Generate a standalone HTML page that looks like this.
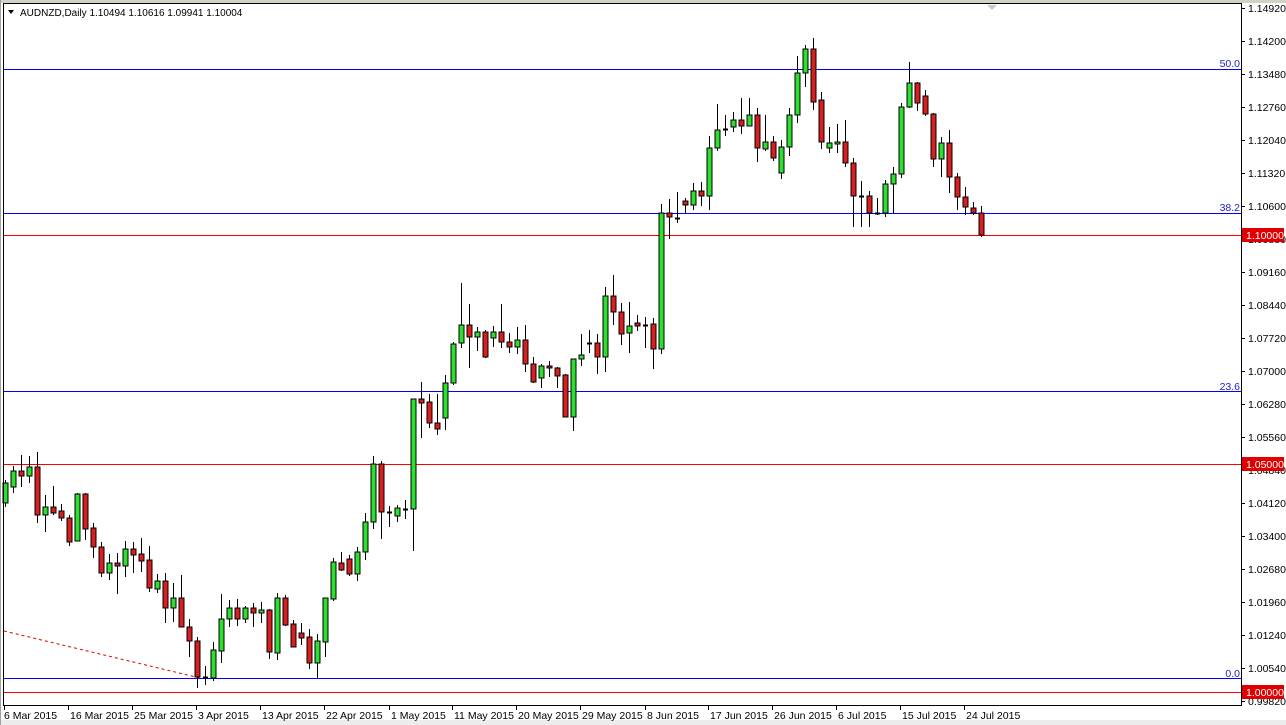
<!DOCTYPE html>
<html><head><meta charset="utf-8">
<style>
html,body{margin:0;padding:0;background:#fff;width:1286px;height:725px;overflow:hidden}
svg{display:block}
text{font-family:"Liberation Sans",Arial,sans-serif;font-size:10.5px;fill:#000}
</style></head>
<body>
<svg id="s" width="1286" height="725" viewBox="0 0 1286 725" xmlns="http://www.w3.org/2000/svg">
<rect x="0" y="0" width="1286" height="725" fill="#fff"/>
<rect x="0" y="0" width="1286" height="3" fill="#d4d0c8"/>
<rect x="0" y="720" width="1286" height="5" fill="#ececec"/>
<rect x="0" y="0" width="1" height="725" fill="#a0a0a0"/>
<polygon points="987,5 997,5 992,10" fill="#c8c8c8"/>
<rect x="4" y="69" width="1237" height="1" fill="#0000ff"/>
<rect x="4" y="213" width="1237" height="1" fill="#0000ff"/>
<rect x="4" y="391" width="1237" height="1" fill="#0000ff"/>
<rect x="4" y="678" width="1237" height="1" fill="#0000ff"/>
<rect x="4" y="235" width="1237" height="1" fill="#ff0000"/>
<rect x="4" y="464" width="1237" height="1" fill="#ff0000"/>
<rect x="4" y="692" width="1237" height="1" fill="#ff0000"/>
<line x1="4" y1="631" x2="200" y2="678" stroke="#e00000" stroke-width="1" stroke-dasharray="3,3"/>
<g style="font-size:10px">
<text x="1240" y="67" text-anchor="end" style="fill:#2020c0">50.0</text>
<text x="1240" y="211" text-anchor="end" style="fill:#2020c0">38.2</text>
<text x="1240" y="390" text-anchor="end" style="fill:#2020c0">23.6</text>
<text x="1240" y="677" text-anchor="end" style="fill:#2020c0">0.0</text>
</g>
<g id="c"></g>
<rect x="3.5" y="3.5" width="1238" height="702" fill="none" stroke="#000" stroke-width="1"/>
<text x="20" y="16" style="font-size:10px">AUDNZD,Daily  1.10494 1.10616 1.09941 1.10004</text>
<polygon points="8,10 14,10 11,14" fill="#000"/>
<g id="ax"></g>
<rect x="1242" y="228" width="42" height="14" fill="#e00000"/>
<text x="1246" y="239" style="fill:#fff">1.10000</text>
<rect x="1242" y="457" width="42" height="14" fill="#e00000"/>
<text x="1246" y="468" style="fill:#fff">1.05000</text>
<rect x="1242" y="685" width="42" height="14" fill="#e00000"/>
<text x="1246" y="696" style="fill:#fff">1.00000</text>
</svg>
<script>
var d=[[5,503,483,480,507],[13,487,471,466,493],[21,471,476,455,487],[29,476,467,456,483],[37,467,515,452,523],[45,515,507,495,532],[53,507,513,486,515],[61,511,518,504,521],[69,518,542,515,546],[77,541,494,493,541],[85,494,529,493,540],[93,528,547,523,558],[101,547,573,542,577],[109,573,563,554,580],[117,563,566,553,594],[125,566,549,541,577],[133,549,555,542,573],[141,554,561,538,572],[149,560,588,546,592],[157,589,581,574,593],[165,581,608,573,623],[173,608,598,583,622],[181,598,627,575,627],[189,627,641,619,657],[197,641,677,637,688],[205,677,677,666,685],[213,678,650,642,681],[221,651,619,594,663],[229,619,608,600,627],[237,608,619,599,626],[245,619,608,606,623],[253,608,613,603,627],[261,613,610,602,623],[269,610,652,609,659],[277,653,598,593,660],[285,598,625,595,626],[293,624,647,620,647],[301,633,638,623,645],[309,637,663,629,669],[317,663,641,634,678],[325,642,598,598,657],[333,599,562,558,601],[341,563,570,552,571],[349,559,574,555,576],[357,574,552,547,581],[365,552,522,513,560],[373,522,464,456,529],[381,464,512,461,539],[389,512,512,506,527],[397,516,508,505,522],[405,509,509,500,519],[413,509,399,399,551],[421,399,403,382,438],[429,402,423,394,428],[437,423,429,394,435],[445,418,383,375,430],[453,383,344,342,385],[461,343,325,283,348],[469,325,337,304,368],[477,337,332,327,351],[485,332,357,330,358],[493,338,332,326,347],[501,332,342,304,348],[509,342,347,333,353],[517,347,340,327,354],[525,340,364,325,372],[533,364,382,357,383],[541,378,366,364,388],[549,366,368,361,377],[557,368,376,367,388],[565,375,417,374,417],[573,417,359,359,431],[581,359,355,334,366],[589,343,343,330,353],[597,343,357,334,374],[605,357,296,287,372],[613,296,312,275,325],[621,312,334,303,345],[629,333,326,302,353],[637,323,326,315,331],[645,325,325,317,348],[653,324,349,318,369],[661,349,213,204,354],[669,213,217,199,239],[677,218,219,192,223],[685,201,205,198,213],[693,205,191,183,210],[701,191,196,182,206],[709,196,148,136,210],[717,148,130,104,151],[725,129,129,115,136],[733,127,120,112,132],[741,120,126,98,134],[749,126,115,98,126],[757,115,148,108,162],[765,149,142,115,151],[773,142,158,136,161],[781,173,147,140,179],[789,147,115,108,156],[797,115,73,56,123],[805,73,49,45,87],[813,49,102,38,110],[821,100,142,92,149],[829,148,143,127,153],[837,144,142,124,153],[845,142,163,120,167],[853,163,196,158,227],[861,196,196,181,227],[869,196,213,191,227],[877,213,213,198,215],[885,213,184,180,217],[893,184,174,167,213],[901,174,107,103,178],[909,107,83,62,108],[917,83,103,82,111],[925,96,114,90,116],[933,114,159,113,167],[941,159,143,137,177],[949,143,177,130,193],[957,177,197,173,210],[965,197,207,187,215],[973,208,213,202,215],[981,213,235,206,237]];
var g=document.getElementById("c"),h="";
d.forEach(function(c){var x=c[0],o=c[1],cl=c[2],hi=c[3],lo=c[4];
h+='<rect x="'+x+'" y="'+hi+'" width="1" height="'+(lo-hi)+'" fill="#000"/>';
var t=Math.min(o,cl),b=Math.max(o,cl);
if(b-t<2){h+='<rect x="'+(x-2)+'" y="'+(t-0.5)+'" width="5" height="2" fill="#000"/>';}
else{h+='<rect x="'+(x-2)+'" y="'+t+'" width="5" height="'+(b-t)+'" fill="'+(cl<o?'#2ee02e':'#d81e1e')+'" stroke="#000" stroke-width="1"/>';}
});
g.innerHTML=h;
var ax=document.getElementById("ax"),a="";
var L=["1.14920","1.14200","1.13480","1.12760","1.12040","1.11320","1.10600","1.09880","1.09160","1.08440","1.07720","1.07000","1.06280","1.05560","1.04840","1.04120","1.03400","1.02680","1.01960","1.01240","1.00540","0.99820"];
L.forEach(function(v,i){var y=8+33*i;a+='<rect x="1241" y="'+y+'" width="4" height="1" fill="#000"/><text x="1248" y="'+(y+4)+'">'+v+'</text>';});
var D=[[4,"6 Mar 2015"],[68,"16 Mar 2015"],[132,"25 Mar 2015"],[196,"3 Apr 2015"],[260,"13 Apr 2015"],[324,"22 Apr 2015"],[389,"1 May 2015"],[452,"11 May 2015"],[516,"20 May 2015"],[580,"29 May 2015"],[645,"8 Jun 2015"],[708,"17 Jun 2015"],[772,"26 Jun 2015"],[836,"6 Jul 2015"],[900,"15 Jul 2015"],[964,"24 Jul 2015"]];
D.forEach(function(t){a+='<rect x="'+t[0]+'" y="706" width="1" height="4" fill="#000"/><text x="'+(t[0]+(t[0]<10?0:2))+'" y="719">'+t[1]+'</text>';});
ax.innerHTML=a;
</script>
</body></html>
